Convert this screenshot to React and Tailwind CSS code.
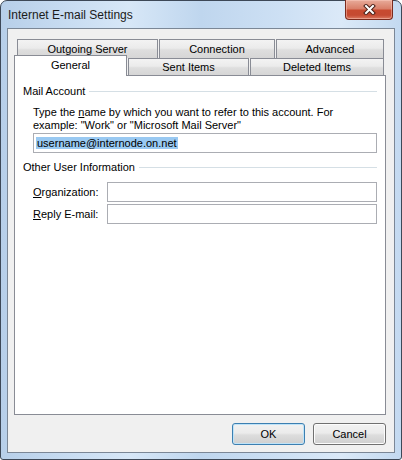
export default function App() {
  const tab =
    'flex items-center justify-center border-t border-l border-r border-[#898c95] bg-[linear-gradient(#f3f3f3,#ebebeb_45%,#dedede_55%,#d6d6d6)]';

  return (
    <div className="w-[402px] h-[460px] font-['Liberation_Sans',Arial,sans-serif] text-[11px] text-black">
      <div className="relative flex flex-col w-full h-full border border-[#3d4857] rounded-t-[7px] rounded-b-[3px] bg-[linear-gradient(90deg,#b7cfe9_0%,#c9ddf2_18%,#d7e7f7_32%,#bfd6ee_50%,#cde0f4_70%,#dbe9f8_85%,#c3d9f0_100%)]">
        {/* title bar */}
        <div className="h-[27px] flex items-center pl-[7px] text-[12px] text-[#1b1b1b]">
          Internet E-mail Settings
        </div>

        {/* close button */}
        <div className="absolute top-[-1px] left-[344px] w-[48px] h-[20px] flex items-center justify-center rounded-b-[4px] border border-t-0 border-[#7b2b1e] bg-[linear-gradient(#e8ab9a,#d9806a_45%,#c84a30_55%,#c54a32_80%,#dc7a62)] shadow-[inset_0_0_0_1px_rgba(255,210,200,0.45)]">
          <svg width="13" height="11" viewBox="0 0 13 11">
            <path d="M3 2 L10 9 M10 2 L3 9" stroke="#4a2018" strokeWidth="4" strokeLinecap="square" />
            <path d="M3 2 L10 9 M10 2 L3 9" stroke="#ffffff" strokeWidth="2" strokeLinecap="square" />
          </svg>
        </div>

        {/* client area */}
        <div className="mx-[6px] h-[425px] border border-[#7b8796] bg-[#f0f0f0] flex flex-col pl-[6px] pr-[8px] pt-[10px]">
          {/* tabs */}
          <div className="flex flex-col h-[36px]">
            <div className="flex gap-[1px] ml-[3px] h-[19px]">
              <div className={`${tab} w-[141px]`}>Outgoing Server</div>
              <div className={`${tab} w-[116px]`}>Connection</div>
              <div className={`${tab} w-[108px]`}>Advanced</div>
            </div>
            <div className="flex items-end gap-[1px] h-[17px]">
              <div className="relative top-px z-10 w-[113px] h-[21px] flex items-center justify-center pb-[1px] border-t border-l border-r border-[#898c95] bg-white">
                General
              </div>
              <div className={`${tab} w-[121px] h-[17px]`}>Sent Items</div>
              <div className={`${tab} w-[134px] h-[17px]`}>Deleted Items</div>
            </div>
          </div>

          {/* panel */}
          <div className="h-[340px] w-[372px] border border-[#898c95] bg-white px-[8px] pt-[9px] leading-[13px]">
            <div className="flex items-center gap-[4px]">
              <span>Mail Account</span>
              <div className="flex-1 h-px bg-[#d5dfe5]" />
            </div>
            <div className="ml-[10px] mt-[8px]">
              Type the <span className="underline">n</span>ame by which you want to refer to this account. For
              <br />
              example: "Work" or "Microsoft Mail Server"
            </div>
            <div className="ml-[10px] mt-[1px] h-[20px] border border-[#abadb3] flex items-center pl-[2px]">
              <span className="bg-[#99c9f2] px-[1px] leading-[12px]">username@internode.on.net</span>
            </div>

            <div className="flex items-center gap-[4px] mt-[8px]">
              <span>Other User Information</span>
              <div className="flex-1 h-px bg-[#d5dfe5]" />
            </div>
            <div className="ml-[10px] mt-[8px] flex items-center h-[20px]">
              <span className="w-[74px]">
                <span className="underline">O</span>rganization:
              </span>
              <div className="flex-1 h-[20px] border border-[#abadb3]" />
            </div>
            <div className="ml-[10px] mt-[2px] flex items-center h-[20px]">
              <span className="w-[74px]">
                <span className="underline">R</span>eply E-mail:
              </span>
              <div className="flex-1 h-[20px] border border-[#abadb3]" />
            </div>
          </div>

          {/* buttons */}
          <div className="flex justify-end gap-[8px] mt-[8px]">
            <button className="w-[73px] h-[22px] rounded-[3px] border border-[#3c7fb1] bg-[linear-gradient(#f2f2f2,#ebebeb_45%,#dddddd_55%,#cfcfcf)] shadow-[inset_0_0_0_1px_#bfe3f8]">
              OK
            </button>
            <button className="w-[73px] h-[22px] rounded-[3px] border border-[#707070] bg-[linear-gradient(#f2f2f2,#ebebeb_45%,#dddddd_55%,#cfcfcf)] shadow-[inset_0_0_0_1px_#fcfcfc]">
              Cancel
            </button>
          </div>
        </div>
        <div className="flex-1" />
      </div>
    </div>
  );
}
